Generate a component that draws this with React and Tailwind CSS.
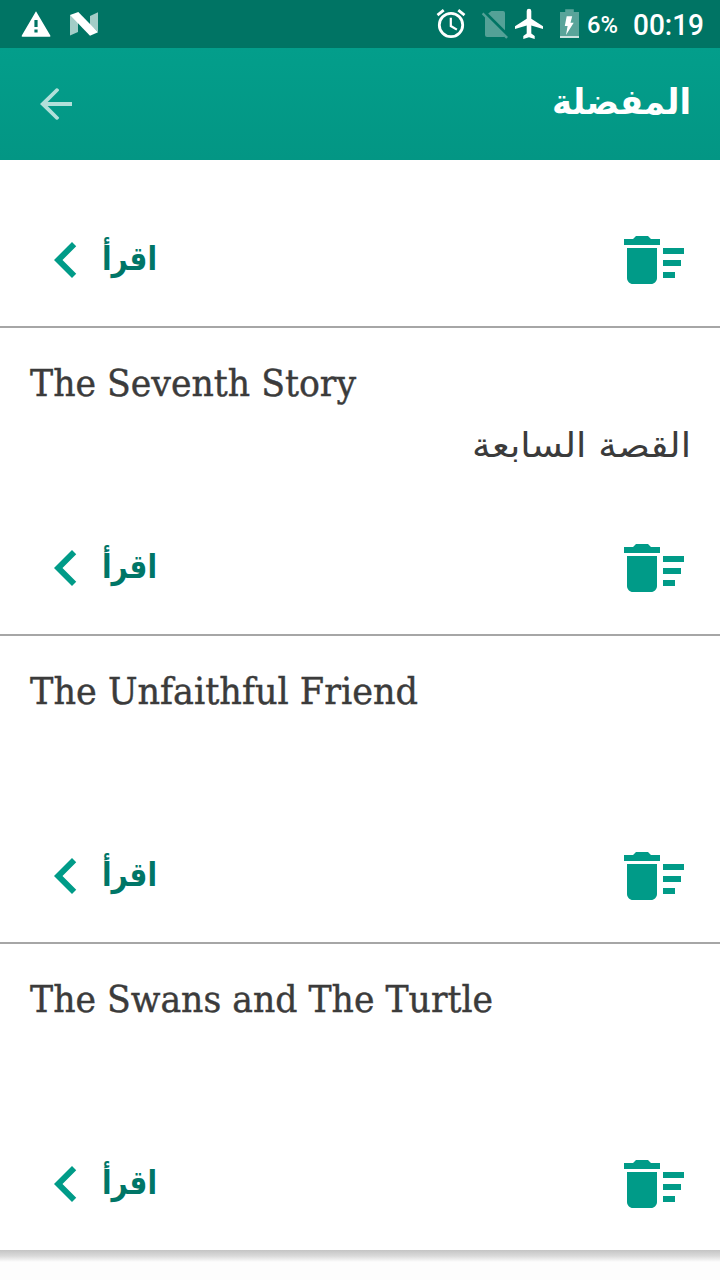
const stories = [
  { title: 'The Seventh Story', arabic: 'القصة السابعة', width: 'w-[326px]', length: 326 },
  { title: 'The Unfaithful Friend', width: 'w-[388px]', length: 388 },
  { title: 'The Swans and The Turtle', width: 'w-[463px]', length: 463 },
]

// Text stretched to a fixed advance, so that it keeps its width with any fallback font
function FitText({ children, length, className, rtl }) {
  return (
    <svg className={`block overflow-visible ${className}`} aria-label={children}>
      <text
        x={rtl ? length : 0}
        y="0"
        direction={rtl ? 'rtl' : 'ltr'}
        textLength={length}
        lengthAdjust="spacingAndGlyphs"
        fill="currentColor"
      >
        {children}
      </text>
    </svg>
  )
}

function StatusBar() {
  return (
    <div className="flex h-12 items-center justify-between bg-[#007464] text-white">
      <div className="ml-5 flex items-center">
        <svg width="32" height="48" viewBox="0 0 32 48" fill="currentColor">
          <path fillRule="evenodd" d="M16 11.2 30.3 35.4q.6 1.3-.8 1.3H2.6q-1.4 0-.8-1.3ZM14.4 20v7h3.2v-7Zm0 9.4v3.2h3.2v-3.2Z" />
        </svg>
        <svg className="ml-[18px]" width="28" height="48" viewBox="0 0 28 48" fill="currentColor">
          <path opacity=".64" d="M0 14.8 8 21v11L0 35.5ZM20 16l8-3.7V32l-8-7Z" />
          <path d="m0 15 8.3-3L28 32.3 20 35.8Z" />
        </svg>
      </div>
      <div className="mr-4 flex items-center font-[Roboto,sans-serif] font-medium">
        <svg width="30" height="48" viewBox="0 0 30 48" fill="none" stroke="currentColor">
          <circle cx="15" cy="25" r="11.7" strokeWidth="2.8" />
          <path d="M14.8 17.7V26l6.1 3.6" strokeWidth="2.2" />
          <path d="m1.5 15.2 6.2-5M28.5 15.2l-6.2-5" strokeWidth="2.8" />
        </svg>
        <svg className="ml-[15px]" width="27" height="48" viewBox="0 0 27 48" fill="currentColor">
          <path
            opacity=".33"
            d="M10.5 11H22q2 0 2 2v17.2L7.2 13.4ZM2.4 12.6 27 37l-1.8 1.8-2-2q-.5.2-1.2.2H6q-2 0-2-2V17.6L.8 14.3Z"
          />
        </svg>
        <svg className="ml-[6px]" width="30" height="48" viewBox="0 0 30 48" fill="currentColor">
          <path d="M29 29v-2.8l-11.7-7.4V11a2.3 2.3 0 0 0-4.6 0v7.8L1 26.2V29l11.7-3.5v8l-3.4 2.4V39l5.7-1.8 5.7 1.8v-3.1l-3.4-2.4v-8Z" />
        </svg>
        <svg className="ml-4" width="19" height="48" viewBox="0 0 19 48" fill="currentColor">
          <path opacity=".35" d="M5.2 9.3h8.6V12H19v24H0V12h5.2Z" />
          <path opacity=".8" d="M0 36h19v2H0Z" />
          <path d="M6.7 16.3h5.5l-1.7 6.5h3.2L6 35l1.6-8.9H4.8Z" />
        </svg>
        <span className="ml-2 w-[31px] text-[24.5px] leading-[50px]">
          <FitText length={31} className="h-px w-[31px] translate-y-[9px]">6%</FitText>
        </span>
        <span className="ml-[15px] w-[71px] text-[29px] leading-[50px]">
          <FitText length={71} className="h-px w-[71px] translate-y-[11px]">00:19</FitText>
        </span>
      </div>
    </div>
  )
}

function Toolbar() {
  return (
    <header className="flex h-28 items-center justify-between bg-gradient-to-b from-[#039e8b] to-[#039684] pr-[30px] pl-8">
      <svg className="size-12 text-[#b2e0da]" viewBox="0 0 24 24" fill="currentColor">
        <path d="M20 11H7.83l5.59-5.59q.3-.3 0-.6l-.51-.51q-.45-.45-.91 0L4 12l8 7.7q.46.45.91 0l.51-.51q.3-.3 0-.6L7.83 13H20z" />
      </svg>
      <h1 className="font-['DejaVu_Sans',sans-serif] text-[35px] font-bold text-white">
        <FitText rtl length={139} className="h-px w-[138px] translate-y-[10px]">المفضلة</FitText>
      </h1>
    </header>
  )
}

function Actions() {
  return (
    <div className="flex h-[102px] items-start justify-between px-[30px]">
      <button className="flex items-center text-[#009b88]">
        <svg className="size-[72px]" viewBox="0 0 24 24" fill="currentColor">
          <path d="M15.41 7.41 14 6l-6 6 6 6 1.41-1.41L10.83 12z" />
        </svg>
        <span className="font-['DejaVu_Sans',sans-serif] text-[33px] font-bold text-[#007667]">
          <FitText rtl length={55} className="h-px w-[55px] translate-y-[10px]">اقرأ</FitText>
        </span>
      </button>
      <svg className="size-[72px] text-[#009b88]" viewBox="0 0 24 24" fill="currentColor">
        <path d="M15 16h4v2h-4zm0-8h7v2h-7zm0 4h6v2h-6zM3 18c0 1.1.9 2 2 2h6c1.1 0 2-.9 2-2V8H3zM14 5h-3l-1-1H6L5 5H2v2h12z" />
      </svg>
    </div>
  )
}

function Story({ story }) {
  return (
    <article className="h-[308px] border-t-2 border-[#a6a6a6] text-[#3b3b3b]">
      <div className="h-[204px] px-[30px]">
        <h2 className="h-[70px] stroke-current stroke-[0.4px] pt-[68px] font-['DejaVu_Serif_Condensed','DejaVu_Serif',serif] text-[37.5px]">
          <FitText length={story.length} className={`h-px ${story.width}`}>{story.title}</FitText>
        </h2>
        {story.arabic && (
          <p className="flex justify-end pt-[59px] font-['DejaVu_Sans',sans-serif] text-[34px]">
            <FitText rtl length={219} className="h-px w-[218px]">{story.arabic}</FitText>
          </p>
        )}
      </div>
      <Actions />
    </article>
  )
}

export default function App() {
  return (
    <div className="h-[1280px] w-[720px] overflow-hidden bg-[#fdfdfd]">
      <StatusBar />
      <Toolbar />
      <main className="h-[1090px] overflow-hidden bg-white pt-16">
        <Actions />
        {stories.map((story) => (
          <Story key={story.title} story={story} />
        ))}
      </main>
      <div className="h-3 bg-linear-to-b from-[#c4c4c4] via-[#dadada] via-50% to-[#fdfdfd]" />
    </div>
  )
}
